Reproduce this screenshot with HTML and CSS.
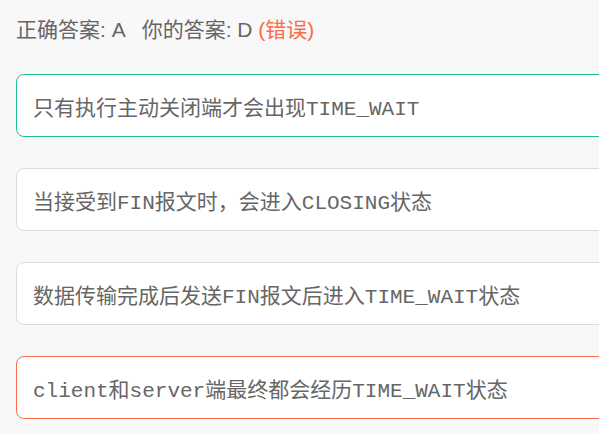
FILE: index.html
```html
<!DOCTYPE html>
<html lang="zh-CN">
<head>
<meta charset="utf-8">
<title>答题结果</title>
<link rel="stylesheet" href="styles.css">
</head>
<body>
<div class="page">
  <div class="result">
    <span class="label">正确答案: A</span>
    <span class="label mine">你的答案: D <span class="wrong">(错误)</span></span>
  </div>
  <ul class="options">
    <li class="option correct">只有执行主动关闭端才会出现TIME_WAIT</li>
    <li class="option">当接受到FIN报文时，会进入CLOSING状态</li>
    <li class="option">数据传输完成后发送FIN报文后进入TIME_WAIT状态</li>
    <li class="option chosen">client和server端最终都会经历TIME_WAIT状态</li>
  </ul>
</div>
</body>
</html>
```
FILE: styles.css
```css
html, body {
  margin: 0;
  padding: 0;
  overflow: hidden;
  background: #f8f8f8;
}
.page {
  padding: 16px 0 0 16px;
  width: 680px;
}
.result {
  font-family: "Liberation Sans", "Noto Sans CJK SC", sans-serif;
  font-size: 21px;
  line-height: 28px;
  color: #666;
  display: flex;
  gap: 16px;
}
.wrong {
  color: #fb6a4a;
}
.options {
  list-style: none;
  margin: 30px 0 0 0;
  padding: 0;
  display: flex;
  flex-direction: column;
  gap: 31px;
}
.option {
  box-sizing: border-box;
  height: 63px;
  display: flex;
  align-items: center;
  padding: 0 16px;
  border: 1px solid #dcdcdc;
  border-radius: 8px;
  background: #fff;
  font-family: "Liberation Mono", "Noto Sans CJK SC", monospace;
  font-size: 21px;
  color: #666;
  white-space: nowrap;
}
.option.correct {
  border-color: #1dbf98;
}
.option.chosen {
  border-color: #fb6a4a;
}
```
